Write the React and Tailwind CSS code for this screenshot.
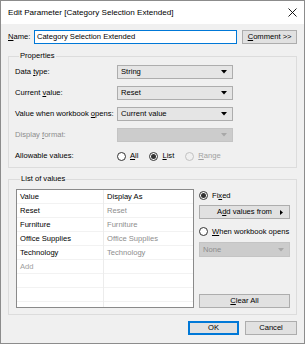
import React from "react";

const font = { fontFamily: '"Liberation Sans", Arial, sans-serif' };

function Arrow({ disabled }) {
  return (
    <svg width="6" height="4" viewBox="0 0 6 4" className="shrink-0">
      <path d="M0 0 H6 L3 3.5 Z" fill={disabled ? "#a8a8a8" : "#000"} />
    </svg>
  );
}

function Combo({ value, disabled, className = "" }) {
  return (
    <div
      className={
        "h-[14px] flex items-center justify-between pl-[3px] pr-[5px] border " +
        (disabled
          ? "bg-[#cccccc] border-[#c4c4c4] text-[#8d8d8d] "
          : "bg-[#e5e5e5] border-[#adadad] text-black ") +
        className
      }
    >
      <span className="leading-none">{value}</span>
      <Arrow disabled={disabled} />
    </div>
  );
}

function Radio({ checked, disabled }) {
  return (
    <span
      className={
        "w-[9px] h-[9px] rounded-full border flex items-center justify-center shrink-0 " +
        (disabled ? "border-[#c2c2c2] bg-[#f0f0f0]" : "border-[#333333] bg-white")
      }
    >
      {checked && <span className="w-[5px] h-[5px] rounded-full bg-[#333333]" />}
    </span>
  );
}

function Btn({ children, className = "", primary }) {
  return (
    <div
      className={
        "h-[14px] flex items-center justify-center bg-[#e1e1e1] border " +
        (primary ? "border-[#0078d7] shadow-[inset_0_0_0_1px_#0078d7] " : "border-[#adadad] ") +
        className
      }
    >
      {children}
    </div>
  );
}

const U = ({ children }) => <span className="underline underline-offset-1">{children}</span>;

export default function App() {
  const rows = [
    ["Reset", "Reset"],
    ["Furniture", "Furniture"],
    ["Office Supplies", "Office Supplies"],
    ["Technology", "Technology"],
  ];
  return (
    <div
      className="w-[305px] h-[344px] flex flex-col border border-[#8c8c8c] bg-[#f0f0f0] text-[7.6px] leading-[12px] text-black"
      style={font}
    >
      <div className="h-[23px] bg-white flex items-center justify-between pl-[7px] pr-[7px]">
        <span className="text-[8.1px]">Edit Parameter [Category Selection Extended]</span>
        <svg width="9" height="9" viewBox="0 0 9 9">
          <path d="M0.5 0.5 L8.5 8.5 M8.5 0.5 L0.5 8.5" stroke="#000" strokeWidth="0.9" />
        </svg>
      </div>
      <div className="flex-1 flex flex-col px-[7px]">
        <div className="mt-[6px] h-[14px] flex items-center">
          <span className="w-[26px]">
            <U>N</U>ame:
          </span>
          <div className="w-[204px] h-[14px] border border-[#0078d7] bg-white flex items-center pl-[2px]">
            Category Selection Extended
          </div>
          <Btn className="ml-[5px] w-[55px]">
            <span>
              <U>C</U>omment &gt;&gt;
            </span>
          </Btn>
        </div>

        <fieldset className="mt-[6px] border border-[#dcdcdc] pl-[6px] pt-[3px] pb-[4px]">
          <legend className="ml-[4px] px-[1px]">Properties</legend>
          <div className="flex flex-col gap-[7px]">
            <div className="flex items-center h-[14px]">
              <span className="w-[102px]">
                Data <U>t</U>ype:
              </span>
              <Combo value="String" className="w-[116px]" />
            </div>
            <div className="flex items-center h-[14px]">
              <span className="w-[102px]">
                Current <U>v</U>alue:
              </span>
              <Combo value="Reset" className="w-[116px]" />
            </div>
            <div className="flex items-center h-[14px]">
              <span className="w-[102px]">
                Value when workbook <U>o</U>pens:
              </span>
              <Combo value="Current value" className="w-[116px]" />
            </div>
            <div className="flex items-center h-[14px]">
              <span className="w-[102px] text-[#8d8d8d]">
                Display <U>f</U>ormat:
              </span>
              <Combo value="" disabled className="w-[116px]" />
            </div>
            <div className="flex items-center h-[14px]">
              <span className="w-[102px]">Allowable values:</span>
              <div className="flex items-center gap-[4px]">
                <Radio />
                <span>
                  <U>A</U>ll
                </span>
              </div>
              <div className="flex items-center gap-[4px] ml-[11px]">
                <Radio checked />
                <span>
                  <U>L</U>ist
                </span>
              </div>
              <div className="flex items-center gap-[4px] ml-[11px] text-[#a0a0a0]">
                <Radio disabled />
                <span>
                  <U>R</U>ange
                </span>
              </div>
            </div>
          </div>
        </fieldset>

        <fieldset className="mt-[5px] border border-[#dcdcdc] pl-[7px] pt-[4px] pb-[6px]">
          <legend className="ml-[4px] px-[1px]">List of values</legend>
          <div className="flex">
            <div className="w-[178px] h-[119px] border border-[#8a8a8a] bg-white overflow-hidden flex">
              <div className="w-[87px] border-r border-[#ececec] flex flex-col">
                <div className="h-[14px] pl-[3px] flex items-center border-b border-[#f2f2f2]">Value</div>
                {rows.map((r) => (
                  <div key={r[0]} className="h-[14px] pl-[3px] flex items-center border-b border-[#f2f2f2]">
                    {r[0]}
                  </div>
                ))}
                <div className="h-[14px] pl-[3px] flex items-center border-b border-[#f2f2f2] text-[#a0a0a0]">Add</div>
                <div className="h-[14px] border-b border-[#f2f2f2]" />
                <div className="h-[14px] border-b border-[#f2f2f2]" />
              </div>
              <div className="flex-1 flex flex-col">
                <div className="h-[14px] pl-[3px] flex items-center border-b border-[#f2f2f2]">Display As</div>
                {rows.map((r) => (
                  <div key={r[1]} className="h-[14px] pl-[3px] flex items-center border-b border-[#f2f2f2] text-[#8d8d8d]">
                    {r[1]}
                  </div>
                ))}
                <div className="h-[14px] border-b border-[#f2f2f2]" />
                <div className="h-[14px] border-b border-[#f2f2f2]" />
                <div className="h-[14px] border-b border-[#f2f2f2]" />
              </div>
            </div>
            <div className="ml-[5px] w-[91px] h-[119px] flex flex-col">
              <div className="h-[13px] flex items-center gap-[4px]">
                <Radio checked />
                <span>
                  Fi<U>x</U>ed
                </span>
              </div>
              <Btn className="mt-[3px] relative">
                <span>
                  A<U>d</U>d values from
                </span>
                <svg width="3" height="5" viewBox="0 0 3 5" className="absolute right-[6px] top-[4px]">
                  <path d="M0 0 L3 2.5 L0 5 Z" fill="#000" />
                </svg>
              </Btn>
              <div className="mt-[6px] h-[13px] flex items-center gap-[4px]">
                <Radio />
                <span>
                  <U>W</U>hen workbook opens
                </span>
              </div>
              <Combo value="None" disabled className="mt-[4px] h-[15px]" />
              <Btn className="mt-auto">
                <span>
                  <U>C</U>lear All
                </span>
              </Btn>
            </div>
          </div>
        </fieldset>

        <div className="mt-[6px] flex justify-end gap-[6px]">
          <Btn primary className="w-[51px]">
            OK
          </Btn>
          <Btn className="w-[52px]">Cancel</Btn>
        </div>
      </div>
    </div>
  );
}
